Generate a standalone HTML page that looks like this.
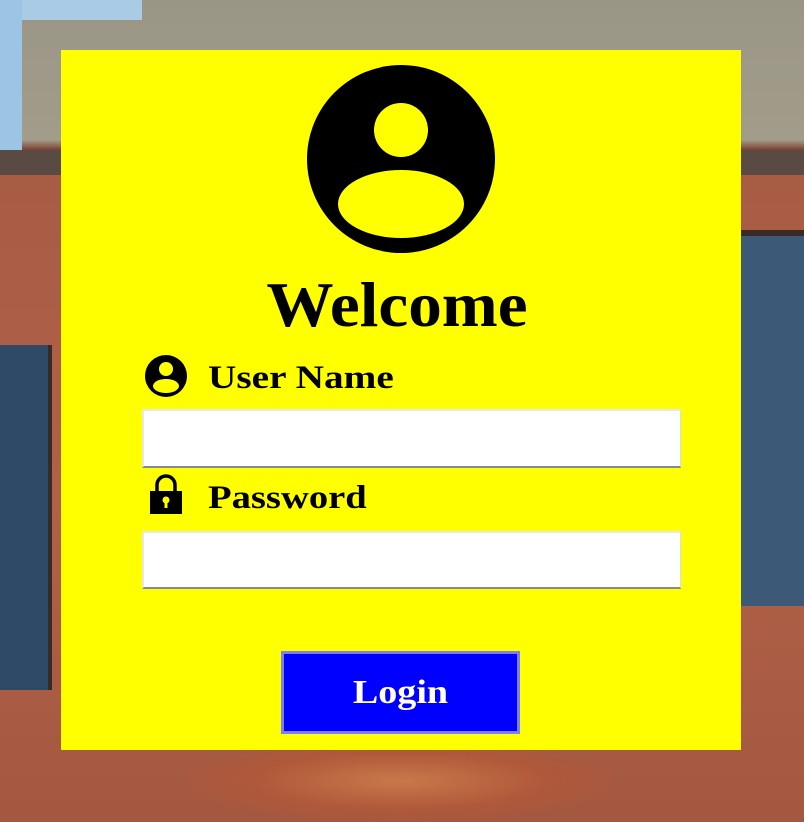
<!DOCTYPE html>
<html><head><style>
html,body{margin:0;padding:0;width:804px;height:822px;overflow:hidden;position:relative;font-family:"Liberation Serif",serif;}
.bg{position:absolute;inset:0;background:linear-gradient(180deg,#9a9686 0,#a29c8a 140px,#7c3f2e 150px,#a85c44 170px,#b06248 500px,#a45840 822px);}
.sky{position:absolute;left:0;top:0;width:22px;height:160px;background:#9cc4e4;}
.sky2{position:absolute;left:22px;top:0;width:120px;height:20px;background:#a9cbe6;}
.roof{position:absolute;left:0;top:150px;width:804px;height:25px;background:#5a4a44;}
.winL{position:absolute;left:0;top:345px;width:48px;height:345px;background:#2e4a66;border-right:4px solid #3a2a26;}
.winR{position:absolute;left:741px;top:230px;width:63px;height:370px;background:#3c5a78;border-top:6px solid #3a2a26;}
.tree{position:absolute;left:190px;top:740px;width:420px;height:82px;background:radial-gradient(ellipse at center,#c8784a 0,#b0583a 50%,rgba(176,88,58,0) 75%);}
.box{position:absolute;left:61px;top:50px;width:680px;height:700px;background:#ff0;}
.t{position:absolute;font-weight:bold;color:#000;white-space:nowrap;line-height:1;transform-origin:left center;}
.inp{position:absolute;left:142px;width:536px;background:#fff;border-top:2px solid #e8e8e8;border-left:2px solid #e8e8e8;border-bottom:2px solid #888;border-right:1px solid #ddd;}
.btn{position:absolute;left:281px;top:651px;width:233px;height:77px;background:#00f;border:3px solid #7f7ff0;}
.btn span{position:absolute;left:0;width:233px;text-align:center;color:#fff;font-weight:bold;font-size:34px;line-height:77px;transform:scaleX(1.12);}
</style></head><body>
<div class="bg"></div><div class="sky"></div><div class="sky2"></div><div class="roof"></div>
<div class="winL"></div><div class="winR"></div><div class="tree"></div>
<div class="box"></div>
<svg style="position:absolute;left:0;top:0" width="804" height="822">
<circle cx="401" cy="159" r="94" fill="#000"/>
<circle cx="401" cy="130" r="27" fill="#ff0"/>
<ellipse cx="401" cy="204" rx="63" ry="34" fill="#ff0"/>
<circle cx="166" cy="376" r="21" fill="#000"/>
<circle cx="166" cy="369" r="7" fill="#ff0"/>
<ellipse cx="166" cy="386" rx="13" ry="7" fill="#ff0"/>
<path d="M157 492 v-7 a9 9 0 0 1 18 0 v7" fill="none" stroke="#000" stroke-width="3.5"/>
<rect x="150" y="491" width="32" height="23" fill="#000"/>
<circle cx="166" cy="500" r="3.5" fill="#ff0"/><rect x="164.5" y="501" width="3" height="7" fill="#ff0"/>
</svg>
<div class="t" style="left:0;width:794px;text-align:center;top:273px;font-size:64px;transform-origin:center;transform:scaleX(1.05);">Welcome</div>
<div class="t" style="left:208px;top:362px;font-size:33px;transform:scaleX(1.19);">User Name</div>
<div class="inp" style="top:409px;height:55px;"></div>
<div class="t" style="left:208px;top:482px;font-size:33px;transform:scaleX(1.17);">Password</div>
<div class="inp" style="top:531px;height:54px;"></div>
<div class="btn"><span>Login</span></div>
</body></html>
